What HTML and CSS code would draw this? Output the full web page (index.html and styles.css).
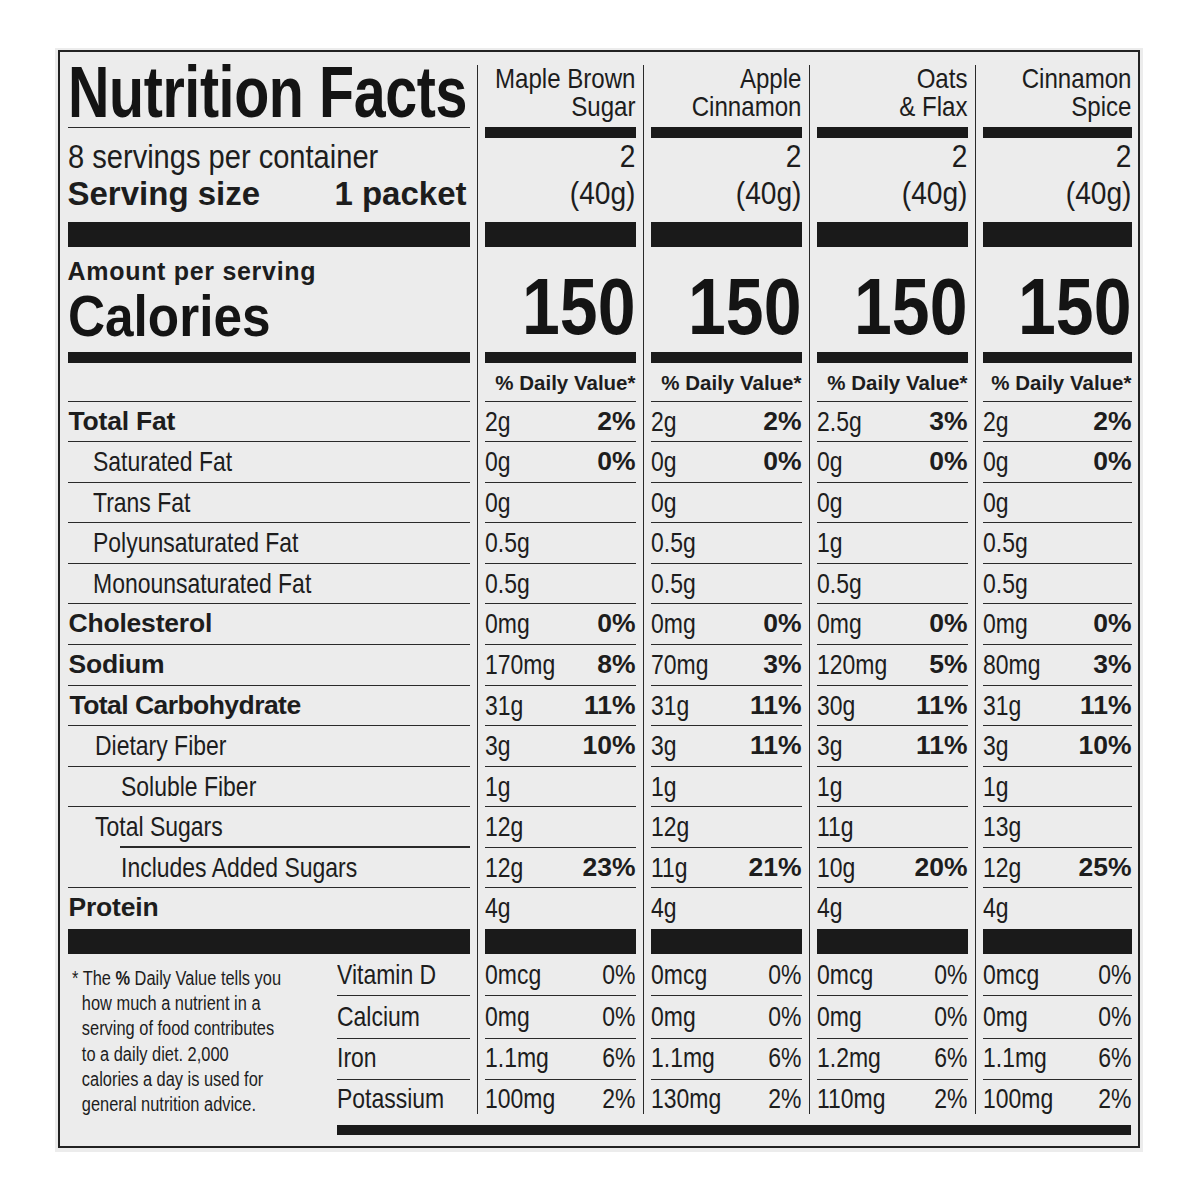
FILE: index.html
```html
<!DOCTYPE html>
<html lang="en">
<head>
<meta charset="utf-8">
<title>Nutrition Facts</title>
<link rel="stylesheet" href="styles.css">
</head>
<body>
<div class="paper">
  <div class="frame">
    <div class="grid">
      <!-- Label column -->
      <div class="lcol">
        <div class="hdr"><h1 class="title">Nutrition Facts</h1></div>
        <div class="rule-thin"></div>
        <div class="serv">
          <div class="serv-l1">8 servings per container</div>
          <div class="serv-l2"><span>Serving size</span><span>1 packet</span></div>
        </div>
        <div class="bar25"></div>
        <div class="cal">
          <div class="amt">Amount per serving</div>
          <div class="calories">Calories</div>
        </div>
        <div class="bar11"></div>
        <div class="dvh"></div>
        <div class="row"><span class="lb">Total Fat</span></div>
        <div class="row"><span class="lr nx">Saturated Fat</span></div>
        <div class="row"><span class="lr nx">Trans Fat</span></div>
        <div class="row"><span class="lr nx">Polyunsaturated Fat</span></div>
        <div class="row"><span class="lr nx">Monounsaturated Fat</span></div>
        <div class="row"><span class="lb">Cholesterol</span></div>
        <div class="row"><span class="lb">Sodium</span></div>
        <div class="row"><span class="lb lb-tight">Total Carbohydrate</span></div>
        <div class="row"><span class="lr lr-b nx">Dietary Fiber</span></div>
        <div class="row"><span class="lr2 nx">Soluble Fiber</span></div>
        <div class="row row-open"><span class="lr lr-b nx">Total Sugars</span></div>
        <div class="rule-indent"></div>
        <div class="row"><span class="lr2 nx">Includes Added Sugars</span></div>
        <div class="row last"><span class="lb">Protein</span></div>
        <div class="bar25"></div>
        <div class="foot">
          <div class="note">
            <p class="note-t">* The <b>%</b> Daily Value tells you<br>how much a nutrient in a<br>serving of food contributes<br>to a daily diet. 2,000<br>calories a day is used for<br>general nutrition advice.</p>
          </div>
          <div class="vits">
            <div class="vrow v1"><span class="nx">Vitamin D</span></div>
            <div class="vrow v2"><span class="nx">Calcium</span></div>
            <div class="vrow v3"><span class="nx">Iron</span></div>
            <div class="vrow v4"><span class="nx">Potassium</span></div>
          </div>
        </div>
      </div>

      <!-- Maple Brown Sugar -->
      <div class="dcol">
        <div class="dhdr">Maple Brown<br>Sugar</div>
        <div class="bar11"></div>
        <div class="dserv">2<br>(40g)</div>
        <div class="bar25"></div>
        <div class="dcal"><span class="dcal-t">150</span></div>
        <div class="bar11"></div>
        <div class="dvh">% Daily Value*</div>
        <div class="row"><span class="v nx">2g</span><b class="p">2%</b></div>
        <div class="row"><span class="v nx">0g</span><b class="p">0%</b></div>
        <div class="row"><span class="v nx">0g</span></div>
        <div class="row"><span class="v nx">0.5g</span></div>
        <div class="row"><span class="v nx">0.5g</span></div>
        <div class="row"><span class="v nx">0mg</span><b class="p">0%</b></div>
        <div class="row"><span class="v nx">170mg</span><b class="p">8%</b></div>
        <div class="row"><span class="v nx">31g</span><b class="p">11%</b></div>
        <div class="row"><span class="v nx">3g</span><b class="p">10%</b></div>
        <div class="row"><span class="v nx">1g</span></div>
        <div class="row"><span class="v nx">12g</span></div>
        <div class="row"><span class="v nx">12g</span><b class="p">23%</b></div>
        <div class="row last"><span class="v nx">4g</span></div>
        <div class="bar25"></div>
        <div class="vrow v1"><span class="nx">0mcg</span><span class="nxr">0%</span></div>
        <div class="vrow v2"><span class="nx">0mg</span><span class="nxr">0%</span></div>
        <div class="vrow v3"><span class="nx">1.1mg</span><span class="nxr">6%</span></div>
        <div class="vrow v4"><span class="nx">100mg</span><span class="nxr">2%</span></div>
      </div>

      <!-- Apple Cinnamon -->
      <div class="dcol">
        <div class="dhdr">Apple<br>Cinnamon</div>
        <div class="bar11"></div>
        <div class="dserv">2<br>(40g)</div>
        <div class="bar25"></div>
        <div class="dcal"><span class="dcal-t">150</span></div>
        <div class="bar11"></div>
        <div class="dvh">% Daily Value*</div>
        <div class="row"><span class="v nx">2g</span><b class="p">2%</b></div>
        <div class="row"><span class="v nx">0g</span><b class="p">0%</b></div>
        <div class="row"><span class="v nx">0g</span></div>
        <div class="row"><span class="v nx">0.5g</span></div>
        <div class="row"><span class="v nx">0.5g</span></div>
        <div class="row"><span class="v nx">0mg</span><b class="p">0%</b></div>
        <div class="row"><span class="v nx">70mg</span><b class="p">3%</b></div>
        <div class="row"><span class="v nx">31g</span><b class="p">11%</b></div>
        <div class="row"><span class="v nx">3g</span><b class="p">11%</b></div>
        <div class="row"><span class="v nx">1g</span></div>
        <div class="row"><span class="v nx">12g</span></div>
        <div class="row"><span class="v nx">11g</span><b class="p">21%</b></div>
        <div class="row last"><span class="v nx">4g</span></div>
        <div class="bar25"></div>
        <div class="vrow v1"><span class="nx">0mcg</span><span class="nxr">0%</span></div>
        <div class="vrow v2"><span class="nx">0mg</span><span class="nxr">0%</span></div>
        <div class="vrow v3"><span class="nx">1.1mg</span><span class="nxr">6%</span></div>
        <div class="vrow v4"><span class="nx">130mg</span><span class="nxr">2%</span></div>
      </div>

      <!-- Oats & Flax -->
      <div class="dcol">
        <div class="dhdr">Oats<br>&amp; Flax</div>
        <div class="bar11"></div>
        <div class="dserv">2<br>(40g)</div>
        <div class="bar25"></div>
        <div class="dcal"><span class="dcal-t">150</span></div>
        <div class="bar11"></div>
        <div class="dvh">% Daily Value*</div>
        <div class="row"><span class="v nx">2.5g</span><b class="p">3%</b></div>
        <div class="row"><span class="v nx">0g</span><b class="p">0%</b></div>
        <div class="row"><span class="v nx">0g</span></div>
        <div class="row"><span class="v nx">1g</span></div>
        <div class="row"><span class="v nx">0.5g</span></div>
        <div class="row"><span class="v nx">0mg</span><b class="p">0%</b></div>
        <div class="row"><span class="v nx">120mg</span><b class="p">5%</b></div>
        <div class="row"><span class="v nx">30g</span><b class="p">11%</b></div>
        <div class="row"><span class="v nx">3g</span><b class="p">11%</b></div>
        <div class="row"><span class="v nx">1g</span></div>
        <div class="row"><span class="v nx">11g</span></div>
        <div class="row"><span class="v nx">10g</span><b class="p">20%</b></div>
        <div class="row last"><span class="v nx">4g</span></div>
        <div class="bar25"></div>
        <div class="vrow v1"><span class="nx">0mcg</span><span class="nxr">0%</span></div>
        <div class="vrow v2"><span class="nx">0mg</span><span class="nxr">0%</span></div>
        <div class="vrow v3"><span class="nx">1.2mg</span><span class="nxr">6%</span></div>
        <div class="vrow v4"><span class="nx">110mg</span><span class="nxr">2%</span></div>
      </div>

      <!-- Cinnamon Spice -->
      <div class="dcol">
        <div class="dhdr">Cinnamon<br>Spice</div>
        <div class="bar11"></div>
        <div class="dserv">2<br>(40g)</div>
        <div class="bar25"></div>
        <div class="dcal"><span class="dcal-t">150</span></div>
        <div class="bar11"></div>
        <div class="dvh">% Daily Value*</div>
        <div class="row"><span class="v nx">2g</span><b class="p">2%</b></div>
        <div class="row"><span class="v nx">0g</span><b class="p">0%</b></div>
        <div class="row"><span class="v nx">0g</span></div>
        <div class="row"><span class="v nx">0.5g</span></div>
        <div class="row"><span class="v nx">0.5g</span></div>
        <div class="row"><span class="v nx">0mg</span><b class="p">0%</b></div>
        <div class="row"><span class="v nx">80mg</span><b class="p">3%</b></div>
        <div class="row"><span class="v nx">31g</span><b class="p">11%</b></div>
        <div class="row"><span class="v nx">3g</span><b class="p">10%</b></div>
        <div class="row"><span class="v nx">1g</span></div>
        <div class="row"><span class="v nx">13g</span></div>
        <div class="row"><span class="v nx">12g</span><b class="p">25%</b></div>
        <div class="row last"><span class="v nx">4g</span></div>
        <div class="bar25"></div>
        <div class="vrow v1"><span class="nx">0mcg</span><span class="nxr">0%</span></div>
        <div class="vrow v2"><span class="nx">0mg</span><span class="nxr">0%</span></div>
        <div class="vrow v3"><span class="nx">1.1mg</span><span class="nxr">6%</span></div>
        <div class="vrow v4"><span class="nx">100mg</span><span class="nxr">2%</span></div>
      </div>
    </div>
    <div class="bottom-bar"></div>
  </div>
</div>
</body>
</html>
```

FILE: styles.css
```css
* { box-sizing: border-box; }

body {
  margin: 0;
  background: #ffffff;
  color: #1d1d1d;
  font-family: "Liberation Sans", Arial, sans-serif;
  font-size: 28px;
}

/* condensed rendering of regular text (Helvetica Condensed look) */
.nx {
  display: inline-block;
  transform: scaleX(0.82);
  transform-origin: left center;
}
.nxr {
  display: inline-block;
  transform: scaleX(0.82);
  transform-origin: right center;
}

.paper {
  width: 1088px;
  height: 1104px;
  margin: 48px 0 0 55px;
  padding: 2px 3px 4px 3px;
  background: #ececec;
}

.frame {
  width: 1082px;
  height: 1098px;
  border: 2.5px solid #222;
  padding: 12.5px 0 0 7.5px;
}

.grid {
  display: grid;
  grid-template-columns: 402px 159px 159px 159px 157px;
  column-gap: 7px;
}

.dcol {
  border-left: 1.5px solid #2a2a2a;
  padding-left: 7.5px;
}

/* bars and rules */
.bar11 { height: 11px; background: #1a1a1a; }
.bar25 { height: 25px; background: #1a1a1a; }
.rule-thin { height: 11px; border-top: 1.5px solid #2a2a2a; margin-top: 0.5px; margin-bottom: -0.5px; }
.rule-indent { height: 1.5px; margin-left: 52px; background: #2a2a2a; }

/* header */
.hdr { height: 62px; }
.title {
  margin: 0;
  font-weight: 700;
  font-size: 72px;
  line-height: 54px;
  letter-spacing: -0.5px;
  white-space: nowrap;
  color: #141414;
  transform: scaleX(0.797);
  transform-origin: left center;
}

.dhdr {
  height: 62px;
  margin-left: -40px;
  text-align: right;
  font-size: 28px;
  line-height: 28px;
  white-space: nowrap;
  transform: scaleX(0.86);
  transform-origin: right center;
}

/* serving */
.serv { height: 84px; }
.serv-l1 {
  font-size: 34px;
  line-height: 37px;
  white-space: nowrap;
  transform: scaleX(0.855);
  transform-origin: left center;
}
.serv-l2 {
  display: flex;
  justify-content: space-between;
  font-weight: 700;
  font-size: 33px;
  line-height: 37px;
  padding-right: 3px;
  white-space: nowrap;
}
.dserv {
  height: 84px;
  text-align: right;
  font-size: 32px;
  line-height: 37px;
  transform: scaleX(0.88);
  transform-origin: right center;
}

/* calories */
.cal { height: 105px; padding-top: 6px; }
.amt {
  font-weight: 700;
  font-size: 25px;
  line-height: 36px;
  letter-spacing: 0.7px;
  white-space: nowrap;
}
.calories {
  font-weight: 700;
  font-size: 57px;
  line-height: 55px;
  color: #141414;
  transform: scaleX(0.9);
  transform-origin: left center;
}
.dcal {
  height: 105px;
  padding-top: 20px;
  text-align: right;
}
.dcal-t {
  display: inline-block;
  font-weight: 700;
  font-size: 80px;
  line-height: 80px;
  color: #141414;
  transform: scaleX(0.85);
  transform-origin: right center;
}

/* daily value header */
.dvh {
  height: 39px;
  border-bottom: 1.5px solid #2a2a2a;
  padding-top: 1px;
  text-align: right;
  font-weight: 700;
  font-size: 20.5px;
  line-height: 37px;
  white-space: nowrap;
}

/* nutrient rows */
.row {
  display: flex;
  justify-content: space-between;
  height: 40.58px;
  border-bottom: 1.5px solid #2a2a2a;
  line-height: 39px;
  white-space: nowrap;
}
.row.last { height: 41px; border-bottom: 0; }
.row.row-open { height: 39.08px; border-bottom: 0; }

.lb {
  font-weight: 700;
  font-size: 26.5px;
  letter-spacing: -0.2px;
  padding-left: 1px;
}
.lb-tight { letter-spacing: -0.55px; padding-left: 2px; }
.lr { font-size: 28px; margin-left: 25px; }
.lr-b { margin-left: 27px; }
.lr2 { font-size: 28px; margin-left: 53px; }

.v { font-size: 28px; }
.p {
  font-weight: 700;
  font-size: 26.5px;
}

/* footer */
.foot { display: flex; height: 160px; }
.note {
  flex: 1;
  padding: 11.5px 0 0 4px;
}
.note-t {
  margin: 0;
  padding-left: 12px;
  text-indent: -12px;
  font-size: 20px;
  line-height: 25.2px;
  white-space: nowrap;
  transform: scaleX(0.82);
  transform-origin: left top;
}
.note-t b { font-weight: 700; }
.vits { width: 133px; }

.vrow {
  display: flex;
  justify-content: space-between;
  border-bottom: 1.5px solid #2a2a2a;
  padding-top: 4.5px;
  font-size: 28px;
  line-height: 32px;
  white-space: nowrap;
}
.vrow.v1 { height: 42px; }
.vrow.v2 { height: 43px; }
.vrow.v3 { height: 41px; padding-top: 2.5px; }
.vrow.v4 { height: 34px; border-bottom: 0; padding-top: 3px; }

.bottom-bar {
  margin: 11px 0 0 269px;
  width: 794px;
  height: 10px;
  background: #1a1a1a;
}
```
